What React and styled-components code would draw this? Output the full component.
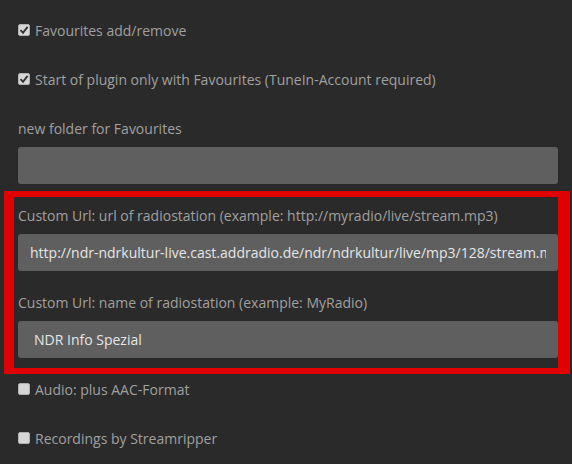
import React from 'react';
import styled, { createGlobalStyle } from 'styled-components';

const Global = createGlobalStyle`
  html, body {
    margin: 0;
    padding: 0;
    background: #2a2a2a;
  }
  body {
    font-family: "Open Sans", "Liberation Sans", sans-serif;
    font-size: 14px;
    color: #9e9e9e;
  }
`;

const Page = styled.div`
  position: relative;
  width: 572px;
  height: 464px;
  overflow: hidden;
  box-sizing: border-box;
  padding: 21px 14px 0 18px;
  display: flex;
  flex-direction: column;
`;

const Group = styled.div`
  display: flex;
  flex-direction: column;
  gap: 8px;
  padding-bottom: ${(p) => (p.$check ? 29 : 22)}px;
`;

const CheckRow = styled.label`
  display: flex;
  align-items: center;
  gap: 5px;
  height: 20px;
  line-height: 20px;
  color: #a0a0a0;
`;

const Box = styled.span`
  width: 12px;
  height: 12px;
  box-sizing: border-box;
  border: 1px solid #b0b0b0;
  border-radius: 2px;
  background: #d6d6d6;
  display: flex;
  align-items: center;
  justify-content: center;
  margin-top: -3px;
  flex: none;
`;

const Label = styled.div`
  height: 20px;
  line-height: 20px;
  color: #a0a0a0;
  white-space: nowrap;
`;

const Field = styled.div`
  display: flex;
  height: 37px;
  line-height: 37px;
  border-radius: 3px;
  background: #5f5f5f;
  color: #e6e6e6;
  padding: 0 12px 0 ${(p) => p.$pad || 12}px;
`;

const FieldText = styled.span`
  flex: 1;
  min-width: 0;
  white-space: nowrap;
  overflow: hidden;
`;

const Marker = styled.div`
  position: absolute;
  left: 4px;
  top: 191px;
  width: 566px;
  height: 183px;
  box-sizing: border-box;
  border-style: solid;
  border-color: #e00000;
  border-width: 6px 12px 6px 10px;
  pointer-events: none;
`;

function Check({ checked, children }) {
  return (
    <CheckRow>
      <Box>
        {checked && (
          <svg width="10" height="10" viewBox="0 0 10 10">
            <path d="M1.5 5.2 L4 7.8 L8.6 1.8" fill="none" stroke="#333" strokeWidth="1.9" />
          </svg>
        )}
      </Box>
      {children}
    </CheckRow>
  );
}

export default function App() {
  return (
    <>
      <Global />
      <Page>
        <Group $check>
          <Check checked>Favourites add/remove</Check>
        </Group>
        <Group $check>
          <Check checked>Start of plugin only with Favourites (TuneIn-Account required)</Check>
        </Group>
        <Group>
          <Label>new folder for Favourites</Label>
          <Field />
        </Group>
        <Group>
          <Label>Custom Url: url of radiostation (example: http://myradio/live/stream.mp3)</Label>
          <Field>
            <FieldText>http://ndr-ndrkultur-live.cast.addradio.de/ndr/ndrkultur/live/mp3/128/stream.mp3</FieldText>
          </Field>
        </Group>
        <Group>
          <Label>Custom Url: name of radiostation (example: MyRadio)</Label>
          <Field $pad={16}>
            <FieldText>NDR Info Spezial</FieldText>
          </Field>
        </Group>
        <Group $check>
          <Check>Audio: plus AAC-Format</Check>
        </Group>
        <Group $check>
          <Check>Recordings by Streamripper</Check>
        </Group>
        <Marker />
      </Page>
    </>
  );
}
